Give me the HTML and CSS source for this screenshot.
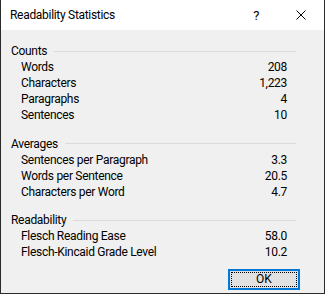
FILE: index.html
```html
<!DOCTYPE html>
<html lang="en">

<head>
    <meta charset="UTF-8">
    <meta name="viewport" content="width=device-width, initial-scale=1.0">
    <title>Readability Statistics</title>
    <link rel="stylesheet" href="styles.css">
</head>

<body>
    <div class="dialog">
        <div class="titlebar">
            <span class="title">Readability Statistics</span>
            <span class="help">?</span>
            <span class="close">
                <svg width="10" height="10" viewBox="0 0 10 10">
                    <path d="M0.5 0.5 L9.5 9.5 M9.5 0.5 L0.5 9.5" stroke="#000" stroke-width="1" fill="none" />
                </svg>
            </span>
        </div>

        <div class="content">
            <div class="group">
                <div class="group-head"><span>Counts</span><span class="rule"></span></div>
                <div class="row"><span>Words</span><span>208</span></div>
                <div class="row"><span>Characters</span><span>1,223</span></div>
                <div class="row"><span>Paragraphs</span><span>4</span></div>
                <div class="row"><span>Sentences</span><span>10</span></div>
            </div>

            <div class="group">
                <div class="group-head"><span>Averages</span><span class="rule"></span></div>
                <div class="row"><span>Sentences per Paragraph</span><span>3.3</span></div>
                <div class="row"><span>Words per Sentence</span><span>20.5</span></div>
                <div class="row"><span>Characters per Word</span><span>4.7</span></div>
            </div>

            <div class="group">
                <div class="group-head"><span>Readability</span><span class="rule"></span></div>
                <div class="row"><span>Flesch Reading Ease</span><span>58.0</span></div>
                <div class="row"><span>Flesch-Kincaid Grade Level</span><span>10.2</span></div>
            </div>

            <div class="actions">
                <button class="ok-button"><span>OK</span></button>
            </div>
        </div>
    </div>
</body>

</html>
```

FILE: styles.css
```css
body {
    margin: 0;
    font-family: Roboto, "Noto Sans", sans-serif;
    font-size: 12px;
    letter-spacing: -0.3px;
    color: #000;
}

.dialog {
    width: 325px;
    height: 294px;
    box-sizing: border-box;
    border: 1px solid #2b2b2b;
    border-top: none;
    background-color: #f0f0f0;
    display: flex;
    flex-direction: column;
}

.titlebar {
    height: 30px;
    background-color: #fff;
    display: flex;
    align-items: center;
    padding-left: 9px;
}

.title {
    flex: 1;
    font-size: 12px;
}

.help {
    font-size: 13px;
    margin-right: 37px;
}

.close {
    display: flex;
    margin-right: 18px;
}

.content {
    padding: 13px 28px 0 10px;
    display: flex;
    flex-direction: column;
}

.group {
    margin-bottom: 12.5px;
}

.group-head {
    display: flex;
    align-items: center;
    height: 16px;
}

.rule {
    flex: 1;
    height: 1px;
    margin-left: 7px;
    background-color: #dadada;
}

.row {
    display: flex;
    justify-content: space-between;
    height: 16px;
    line-height: 16px;
    padding-left: 10px;
    padding-right: 9px;
}

.actions {
    display: flex;
    justify-content: flex-end;
    margin-top: -4px;
}

.ok-button {
    width: 72px;
    height: 21px;
    margin-right: -4px;
    padding: 1px;
    background-color: #e1e1e1;
    border: 2px solid #0078d7;
    font-family: inherit;
    font-size: 12px;
    color: #000;
    display: flex;
}

.ok-button span {
    flex: 1;
    border: 1px dotted #000;
    line-height: 13px;
}
```
